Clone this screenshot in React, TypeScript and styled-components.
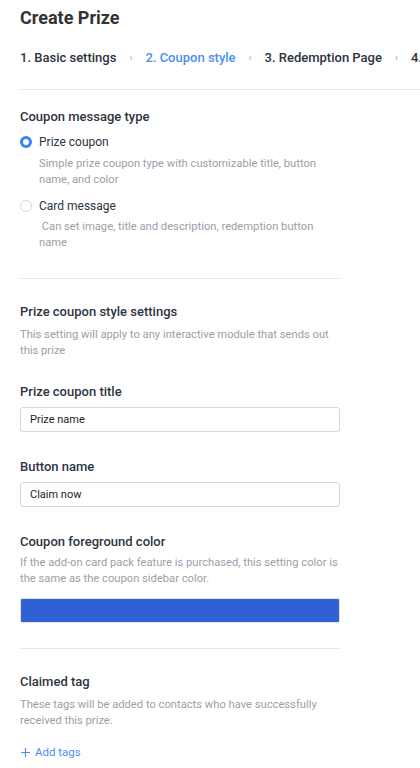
import styled, { createGlobalStyle } from "styled-components";

const GlobalStyle = createGlobalStyle`
  body {
    margin: 0;
    background: #ffffff;
    font-family: Roboto, "Liberation Sans", sans-serif;
    color: #2d3542;
  }
`;

const Page = styled.div`
  padding: 4px 0 0 20px;
  width: 400px;
  overflow: hidden;
`;

const PageTitle = styled.h1`
  margin: 0;
  font-size: 18px;
  line-height: 28px;
  font-weight: 700;
  color: #333333;
`;

const Steps = styled.div`
  display: flex;
  align-items: center;
  gap: 13px;
  margin-top: 16px;
  height: 18px;
  white-space: nowrap;
`;

const Step = styled.span<{ active?: boolean }>`
  font-size: 13px;
  font-weight: 500;
  color: ${props => props.active ? "#4a8ff0" : "#2b3340"};
`;

const Chevron = styled.span`
  font-size: 10px;
  color: #a8adb5;
`;

const Divider = styled.hr<{ full?: boolean, mt: number, mb: number }>`
  border: none;
  border-top: 1px solid #e5e7eb;
  margin: ${props => props.mt}px 0 ${props => props.mb}px 0;
  width: ${props => props.full ? "400px" : "320px"};
`;

const Section = styled.div`
  width: 320px;
`;

const Label = styled.div<{ mt?: number }>`
  font-size: 13px;
  font-weight: 500;
  line-height: 18px;
  color: #2d3542;
  ${props => props.mt !== undefined && `margin-top: ${props.mt}px;`}
`;

const Hint = styled.div<{ mt?: number, indent?: boolean }>`
  font-size: 11.2px;
  line-height: 16px;
  color: #9aa0a9;
  margin-top: ${props => props.mt ?? 4}px;
  ${props => props.indent && `padding-left: 19px;`}
`;

const RadioRow = styled.label<{ mt: number }>`
  display: flex;
  align-items: center;
  gap: 7px;
  margin-top: ${props => props.mt}px;
  font-size: 12px;
  line-height: 16px;
  color: #2d3542;
`;

const RadioDot = styled.span<{ checked?: boolean }>`
  box-sizing: border-box;
  width: 12px;
  height: 12px;
  border-radius: 50%;
  flex-shrink: 0;
  border: ${props => props.checked ? "3.5px solid #3b82f6" : "1px solid #d6d9de"};
  background: #ffffff;
`;

const TextInput = styled.div`
  box-sizing: border-box;
  margin-top: 6px;
  height: 25px;
  border: 1px solid #d5d8dd;
  border-radius: 3px;
  padding: 0 9px;
  display: flex;
  align-items: center;
  font-size: 11px;
  color: #222222;
`;

const ColorSwatch = styled.div<{ color: string }>`
  margin-top: 11px;
  height: 25px;
  border-radius: 2px;
  border: 1px solid #dfe3ea;
  box-sizing: border-box;
  background: ${props => props.color};
`;

const AddTags = styled.div`
  margin-top: 16px;
  display: flex;
  align-items: center;
  gap: 4px;
  font-size: 11.5px;
  color: #4a8ff0;
`;

export default function App() {
  return (
    <Page>
      <GlobalStyle />
      <PageTitle>Create Prize</PageTitle>
      <Steps>
        <Step>1. Basic settings</Step>
        <Chevron>›</Chevron>
        <Step active>2. Coupon style</Step>
        <Chevron>›</Chevron>
        <Step>3. Redemption Page</Step>
        <Chevron>›</Chevron>
        <Step>4.</Step>
      </Steps>
      <Divider full mt={23} mb={18} />

      <Section>
        <Label>Coupon message type</Label>
        <RadioRow mt={8}>
          <RadioDot checked />
          Prize coupon
        </RadioRow>
        <Hint indent mt={6}>Simple prize coupon type with customizable title, button name, and color</Hint>
        <RadioRow mt={10}>
          <RadioDot />
          Card message
        </RadioRow>
        <Hint indent mt={5}>&nbsp;Can set image, title and description, redemption button name</Hint>
      </Section>
      <Divider mt={27} mb={24} />

      <Section>
        <Label>Prize coupon style settings</Label>
        <Hint mt={6}>This setting will apply to any interactive module that sends out this prize</Hint>

        <Label mt={24}>Prize coupon title</Label>
        <TextInput>Prize name</TextInput>

        <Label mt={26}>Button name</Label>
        <TextInput>Claim now</TextInput>

        <Label mt={26}>Coupon foreground color</Label>
        <Hint mt={4}>If the add-on card pack feature is purchased, this setting color is the same as the coupon sidebar color.</Hint>
        <ColorSwatch color="#2f61d5" />
      </Section>
      <Divider mt={25} mb={24} />

      <Section>
        <Label>Claimed tag</Label>
        <Hint mt={6}>These tags will be added to contacts who have successfully received this prize.</Hint>
        <AddTags>
          <svg width="11" height="11" viewBox="0 0 11 11">
            <path d="M5.5 1v9M1 5.5h9" stroke="#4a8ff0" strokeWidth="1.2" />
          </svg>
          Add tags
        </AddTags>
      </Section>
    </Page>
  );
}
